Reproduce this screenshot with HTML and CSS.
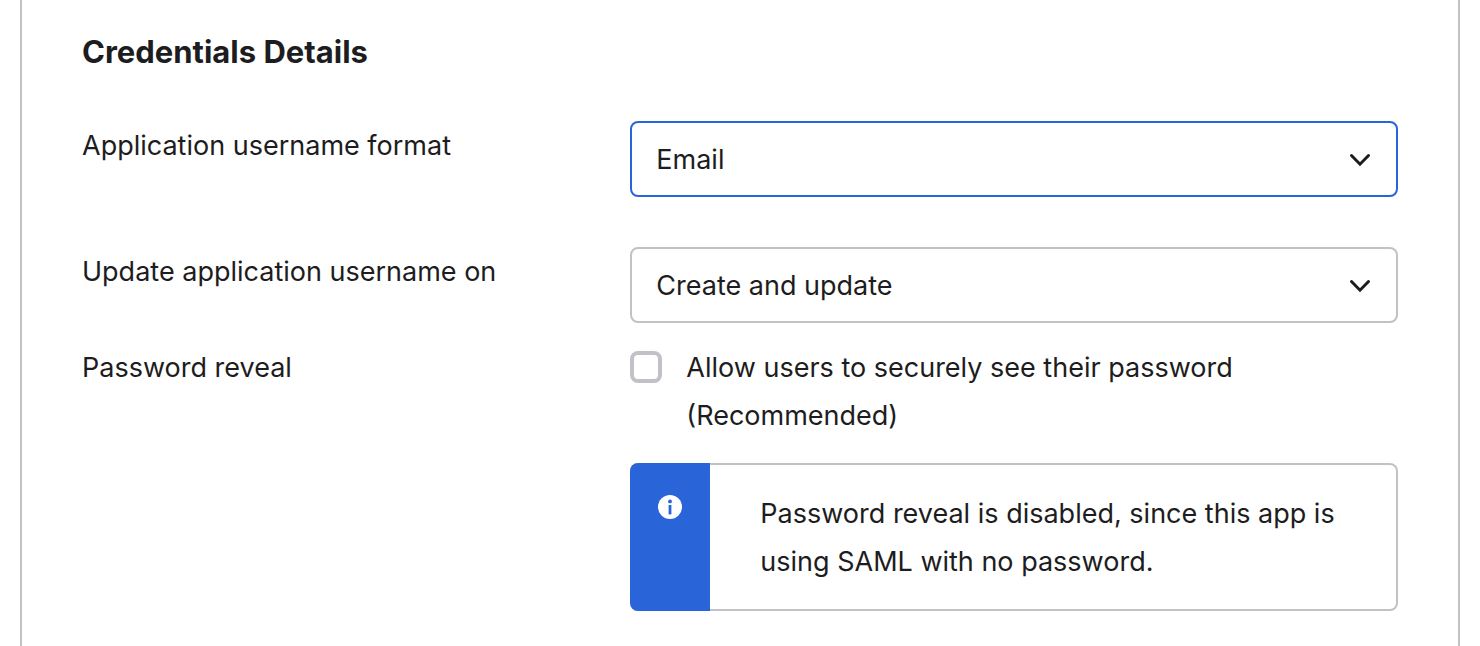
FILE: index.html
```html
<!DOCTYPE html>
<html lang="en">
<head>
  <meta charset="UTF-8" />
  <meta name="viewport" content="width=device-width, initial-scale=1.0"/>
  <title>Credentials Details</title>
  <link rel="stylesheet" href="styles.css">
</head>
<body>

<main class="panel">
  <h2>Credentials Details</h2>

  <form>
    <div class="row">
      <label class="row-label" for="username-format">Application username format</label>
      <div class="select-box active">
        <select id="username-format">
          <option>Email</option>
        </select>
        <svg class="chevron" viewBox="0 0 24 16" aria-hidden="true"><path d="M3.5 3.5l8.5 8.7 8.5-8.7"/></svg>
      </div>
    </div>

    <div class="row">
      <label class="row-label" for="update-on">Update application username on</label>
      <div class="select-box">
        <select id="update-on">
          <option>Create and update</option>
        </select>
        <svg class="chevron" viewBox="0 0 24 16" aria-hidden="true"><path d="M3.5 3.5l8.5 8.7 8.5-8.7"/></svg>
      </div>
    </div>

    <div class="row reveal">
      <span class="row-label">Password reveal</span>
      <div>
        <div class="check">
          <input type="checkbox" id="allow-reveal">
          <label for="allow-reveal">Allow users to securely see their password (Recommended)</label>
        </div>
        <div class="infobox">
          <div class="infobox-icon">
            <svg viewBox="0 0 24 24" aria-hidden="true">
              <circle cx="12" cy="12" r="12" fill="#fff"/>
              <circle cx="12" cy="6.4" r="1.9" fill="#2965d8"/>
              <path d="M10.6 10h2.8v9.4h-2.8z" fill="#2965d8"/>
            </svg>
          </div>
          <p>Password reveal is disabled, since this app is using SAML with no password.</p>
        </div>
      </div>
    </div>
  </form>
</main>

</body>
</html>
```
FILE: styles.css
```css
* {
  box-sizing: border-box;
}

body {
  margin: 0;
  background-color: #fff;
  color: #1d1d21;
  font-family: Inter, "Liberation Sans", sans-serif;
  font-size: 27px;
  line-height: 48px;
}

.panel {
  min-height: 100vh;
  margin: 0 20px;
  padding: 28px 60px 34px;
  border-left: 2px solid #c1c1c8;
  border-right: 2px solid #c1c1c8;
}

h2 {
  margin: 0 0 45px;
  font-size: 31px;
  font-weight: 700;
  line-height: 48px;
}

.row {
  display: grid;
  grid-template-columns: 5fr 7fr;
  margin-bottom: 50px;
}

.row-label {
  padding-top: 1px;
}

.row.reveal {
  margin: -30px 0 0;
}

.select-box {
  position: relative;
}

select {
  width: 100%;
  height: 76px;
  padding: 2px 60px 0 24px;
  appearance: none;
  background-color: #fff;
  border: 2px solid #c1c1c8;
  border-radius: 8px;
  color: inherit;
  font: inherit;
}

.active select {
  border-color: #2965d8;
}

.chevron {
  position: absolute;
  top: 31px;
  right: 26px;
  width: 24px;
  height: 16px;
  fill: none;
  stroke: #1d1d21;
  stroke-width: 3;
  stroke-linecap: round;
  pointer-events: none;
}

.check {
  display: flex;
  gap: 24px;
  padding-top: 1px;
}

.check input {
  flex: none;
  width: 32px;
  height: 32px;
  margin: 7px 0 0;
  appearance: none;
  background-color: #fff;
  border: 4px solid #c1c1c8;
  border-radius: 8px;
}

.infobox {
  display: flex;
  margin-top: 23px;
  border: 2px solid #c1c1c8;
  border-left: none;
  border-radius: 8px;
}

.infobox-icon {
  flex: none;
  width: 80px;
  margin: -2px 0;
  padding-top: 32px;
  background-color: #2965d8;
  border-radius: 8px 0 0 8px;
  text-align: center;
  line-height: 0;
}

.infobox-icon svg {
  width: 24px;
  height: 24px;
}

.infobox p {
  margin: 0;
  padding: 25px 50px 23px;
}
```
